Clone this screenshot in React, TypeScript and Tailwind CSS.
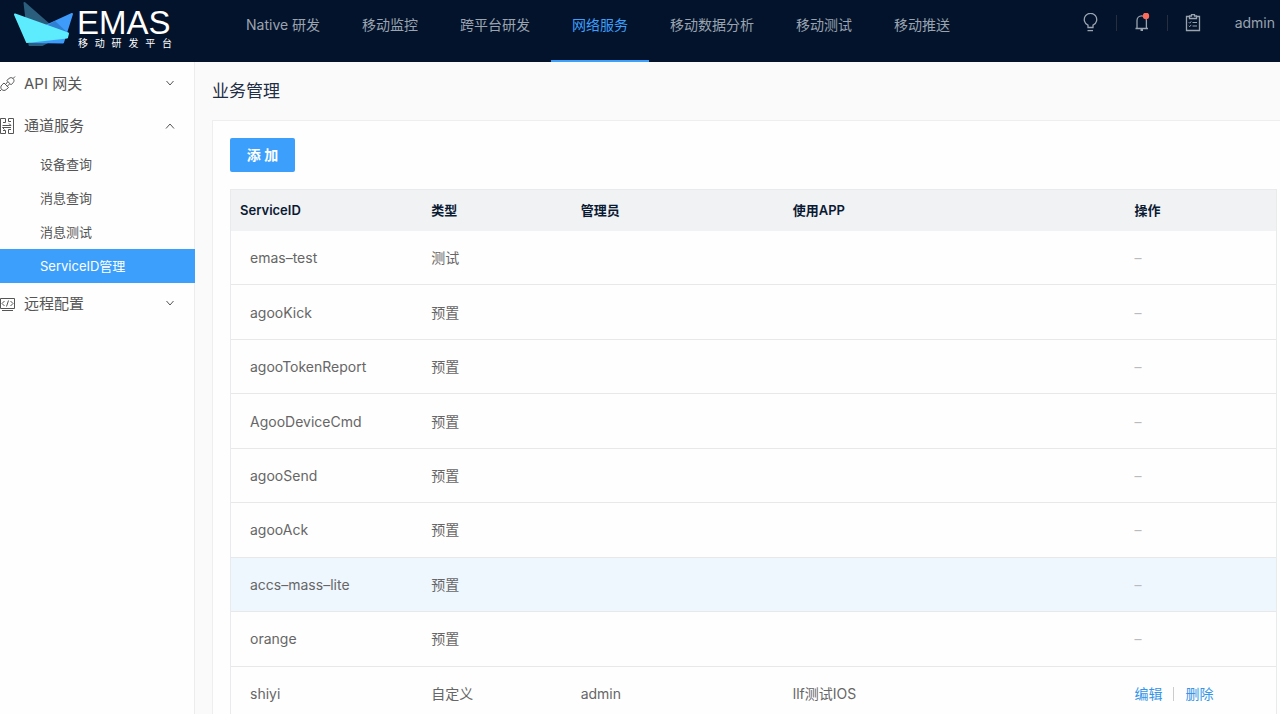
import clsx from "clsx";

type ServiceRow = {
  id: string;
  type: string;
  owner?: string;
  app?: string;
  editable?: boolean;
};

const navItems = [
  "Native 研发",
  "移动监控",
  "跨平台研发",
  "网络服务",
  "移动数据分析",
  "移动测试",
  "移动推送",
];

const channelItems = ["设备查询", "消息查询", "消息测试", "ServiceID管理"];

const services: ServiceRow[] = [
  { id: "emas–test", type: "测试" },
  { id: "agooKick", type: "预置" },
  { id: "agooTokenReport", type: "预置" },
  { id: "AgooDeviceCmd", type: "预置" },
  { id: "agooSend", type: "预置" },
  { id: "agooAck", type: "预置" },
  { id: "accs–mass–lite", type: "预置" },
  { id: "orange", type: "预置" },
  { id: "shiyi", type: "自定义", owner: "admin", app: "llf测试IOS", editable: true },
];

const activeNav = "网络服务";
const activeChannel = "ServiceID管理";
const highlightedRow = "accs–mass–lite";

export default function App() {
  return (
    <div className="flex h-screen flex-col overflow-hidden bg-[#fafafa] font-['Inter','Noto_Sans_CJK_SC',sans-serif] text-sm text-[#666]">
      <TopBar />
      <div className="flex min-h-0 flex-1">
        <Sidebar />
        <main className="flex min-w-0 flex-1 flex-col pl-[17px]">
          <h1 className="flex h-[58px] shrink-0 items-center text-[17px] text-[#1f2d45]">
            业务管理
          </h1>
          <section className="flex-1 border-t border-l border-[#eee] bg-[#fefefe] pt-[17px] pr-[3px] pl-[17px]">
            <button
              type="button"
              className="mb-[17px] flex h-[34px] w-[65px] items-center justify-center rounded-xs bg-[#3d9ffc] font-bold text-white"
            >
              添 加
            </button>
            <ServiceTable />
          </section>
        </main>
      </div>
    </div>
  );
}

function TopBar() {
  return (
    <header className="flex h-[62px] shrink-0 bg-[#03132b] text-[#9aa3b0]">
      <a href="#home" className="flex w-[225px] shrink-0 pl-[13px]" aria-label="EMAS 移动研发平台">
        <Logo />
        <span className="mt-2 ml-1 flex w-[95px] flex-col text-white">
          <span className="font-['Liberation_Sans',sans-serif] text-[33px] leading-[30px]">EMAS</span>
          <span className="flex justify-between pl-px text-[10px] leading-[10px]">
            {[..."移动研发平台"].map((char) => (
              <span key={char}>{char}</span>
            ))}
          </span>
        </span>
      </a>

      <nav className="flex">
        {navItems.map((item) => (
          <a
            key={item}
            href="#nav"
            className={clsx(
              "flex items-center border-b-2 px-[21px] pb-[10px] whitespace-nowrap",
              item === activeNav
                ? "border-[#3d9ffc] text-[#3d9ffc]"
                : "border-transparent"
            )}
          >
            {item}
          </a>
        ))}
      </nav>

      <div className="ml-auto flex h-[45px] items-center gap-[17px] pr-[5px]">
        <button type="button" aria-label="提示">
          <BulbIcon />
        </button>
        <span className="h-4 w-px bg-[#252f3d]" />
        <button type="button" aria-label="通知">
          <BellIcon />
        </button>
        <span className="h-4 w-px bg-[#252f3d]" />
        <button type="button" aria-label="任务">
          <ClipboardIcon />
        </button>
        <a href="#account" className="ml-[17px]">
          admin
        </a>
      </div>
    </header>
  );
}

function Sidebar() {
  return (
    <aside className="w-[195px] shrink-0 border-r border-[#ececec] bg-[#fefefe] pt-px text-[#555]">
      <SidebarGroup label="API 网关" icon={<PlugIcon />} />
      <SidebarGroup label="通道服务" icon={<ChannelIcon />} open />
      <ul className="-mr-px text-[13px]">
        {channelItems.map((item) => (
          <li key={item}>
            <a
              href="#channel"
              className={clsx(
                "flex h-[34px] items-center pl-10",
                item === activeChannel && "bg-[#3d9ffc] text-white"
              )}
            >
              {item}
            </a>
          </li>
        ))}
      </ul>
      <SidebarGroup label="远程配置" icon={<CodeIcon />} />
    </aside>
  );
}

function SidebarGroup({
  label,
  icon,
  open = false,
}: {
  label: string;
  icon: React.ReactNode;
  open?: boolean;
}) {
  return (
    <button
      type="button"
      aria-expanded={open}
      className="flex h-[42px] w-full items-center pr-[19px] text-[15px]"
    >
      {icon}
      <span className="ml-2">{label}</span>
      <svg
        width="10"
        height="10"
        viewBox="0 0 10 10"
        fill="none"
        stroke="currentColor"
        className="ml-auto"
      >
        <path d={open ? "M1 7.5 5 3l4 4.5" : "M1.500 2 5 6l3.500-4"} />
      </svg>
    </button>
  );
}

function ServiceTable() {
  return (
    <table className="h-[532px] w-full table-fixed border-separate border-spacing-0 border border-b-0 border-[#e8eaec] text-left">
      <colgroup>
        <col className="w-[18.3%]" />
        <col className="w-[14.3%]" />
        <col className="w-[20.3%]" />
        <col className="w-[32.7%]" />
        <col />
      </colgroup>
      <thead>
        <tr className="h-[41px] bg-[#f0f2f4] text-[13px] text-[#0b1a33]">
          <th className="pl-[9px] font-semibold">ServiceID</th>
          <th className="pl-[9px] font-bold">类型</th>
          <th className="pl-[9px] font-bold">管理员</th>
          <th className="pl-[9px] font-semibold">使用APP</th>
          <th className="pl-[9px] font-bold">操作</th>
        </tr>
      </thead>
      <tbody>
        {services.map((row) => (
          <tr
            key={row.id}
            className={clsx(
              "h-[54px] *:border-b *:border-[#e8e8e8] *:pt-px",
              row.id === highlightedRow && "bg-[#eef6fe]"
            )}
          >
            <td className="pl-[19px]">{row.id}</td>
            <td className="pl-[9px]">{row.type}</td>
            <td className="pl-[9px]">{row.owner}</td>
            <td className="pl-[9px]">{row.app}</td>
            <td className="pl-[9px]">
              {row.editable ? (
                <div className="flex items-center text-[#3595e8]">
                  <a href="#edit">编辑</a>
                  <span className="mx-[11px] h-[14px] w-px bg-[#ccc]" />
                  <a href="#delete">删除</a>
                </div>
              ) : (
                <span className="text-[#bbb]">–</span>
              )}
            </td>
          </tr>
        ))}
      </tbody>
    </table>
  );
}

function Logo() {
  return (
    <svg width="60" height="48" viewBox="0 0 60 48" strokeLinejoin="round" className="shrink-0">
      <path d="M11.5 3 48 35 29 45 16.500 45z" fill="#2b5d7c" stroke="#2b5d7c" strokeWidth="2" />
      <path d="M59 14 50 42.500 18 42 34 25.500z" fill="#3f9bfa" stroke="#3f9bfa" strokeWidth="2" />
      <path d="M34 25.500 42 21 55 33 50 38z" fill="#2f7fd3" />
      <path d="M2 14.500 55 33.500 54 37.500 14 42z" fill="#5cecfe" stroke="#5cecfe" strokeWidth="2" />
    </svg>
  );
}

function BulbIcon() {
  return (
    <svg width="16" height="20" viewBox="0 0 16 20" fill="none" stroke="currentColor" strokeWidth="1.3">
      <path d="M5 14.500v-2.300A6.200 6.200 0 1 1 10 12.200v2.300z" />
      <path d="M4.500 17.600h5.500" />
    </svg>
  );
}

function BellIcon() {
  return (
    <svg width="16" height="20" viewBox="0 0 16 20" fill="none" stroke="currentColor" strokeWidth="1.3">
      <path d="M1.500 15.500h12.500M3 15.500V7.500a4.700 4.700 0 0 1 9.400 0v8" />
      <path d="M6.500 16h2.500v2H6.500z" fill="currentColor" stroke="none" />
      <circle cx="12" cy="2.900" r="3.200" fill="#ff6b5a" stroke="none" />
    </svg>
  );
}

function ClipboardIcon() {
  return (
    <svg width="16" height="20" viewBox="0 0 16 20" fill="none" stroke="currentColor" strokeWidth="1.3">
      <path d="M4.500 3.500h-3v14h13v-14h-3" />
      <path d="M4.500 5.500v-2.500h2V1.600h3V3h2v2.500z" />
      <path d="M7.500 9.500h4.500M7.500 13h4.500M3.800 9.300l.9.900 1.500-1.800M3.800 12.800l.9.900 1.500-1.800" strokeWidth="1" />
    </svg>
  );
}

function PlugIcon() {
  return (
    <svg width="16" height="16" viewBox="0 0 16 16" fill="none" stroke="currentColor" className="shrink-0">
      <path d="M15 .5 12.800 2.800M1.500 13.500 0 15M6.800 4.500 9 2.500c1.500-1.300 3-1 4.100.1s1.300 2.600 0 4.100L11 8.800z" />
      <path d="M4 7 8.500 11.500 6.300 13.500c-1.500 1.300-3.300 1.200-4.600-.1-1.200-1.200-1.200-3 .1-4.400zM5.500 8.500 7.500 6M7.300 10.300 9.500 8" />
    </svg>
  );
}

function ChannelIcon() {
  return (
    <svg width="16" height="16" viewBox="0 0 16 16" fill="none" stroke="currentColor" className="shrink-0">
      <path d="M.5 15.500V.5h5v4H3M5.500 15.500h-5M5.500 15.500v-3H3M8.500 .5h5v15h-5M8.500 .5v3H11M8.500 15.500v-4H11" />
      <path d="M2.500 7.500h8.500L9 5.500M11 9.500H2.500l2 2" />
    </svg>
  );
}

function CodeIcon() {
  return (
    <svg width="16" height="16" viewBox="0 0 16 16" fill="none" stroke="currentColor" className="shrink-0">
      <path d="M.5 2.500h14v10H.5zM2 14.500h11" />
      <path d="M4.500 5 2 7.500 4.500 10M10.500 5 13 7.500 10.500 10M8.500 4.500l-2 6" />
    </svg>
  );
}
